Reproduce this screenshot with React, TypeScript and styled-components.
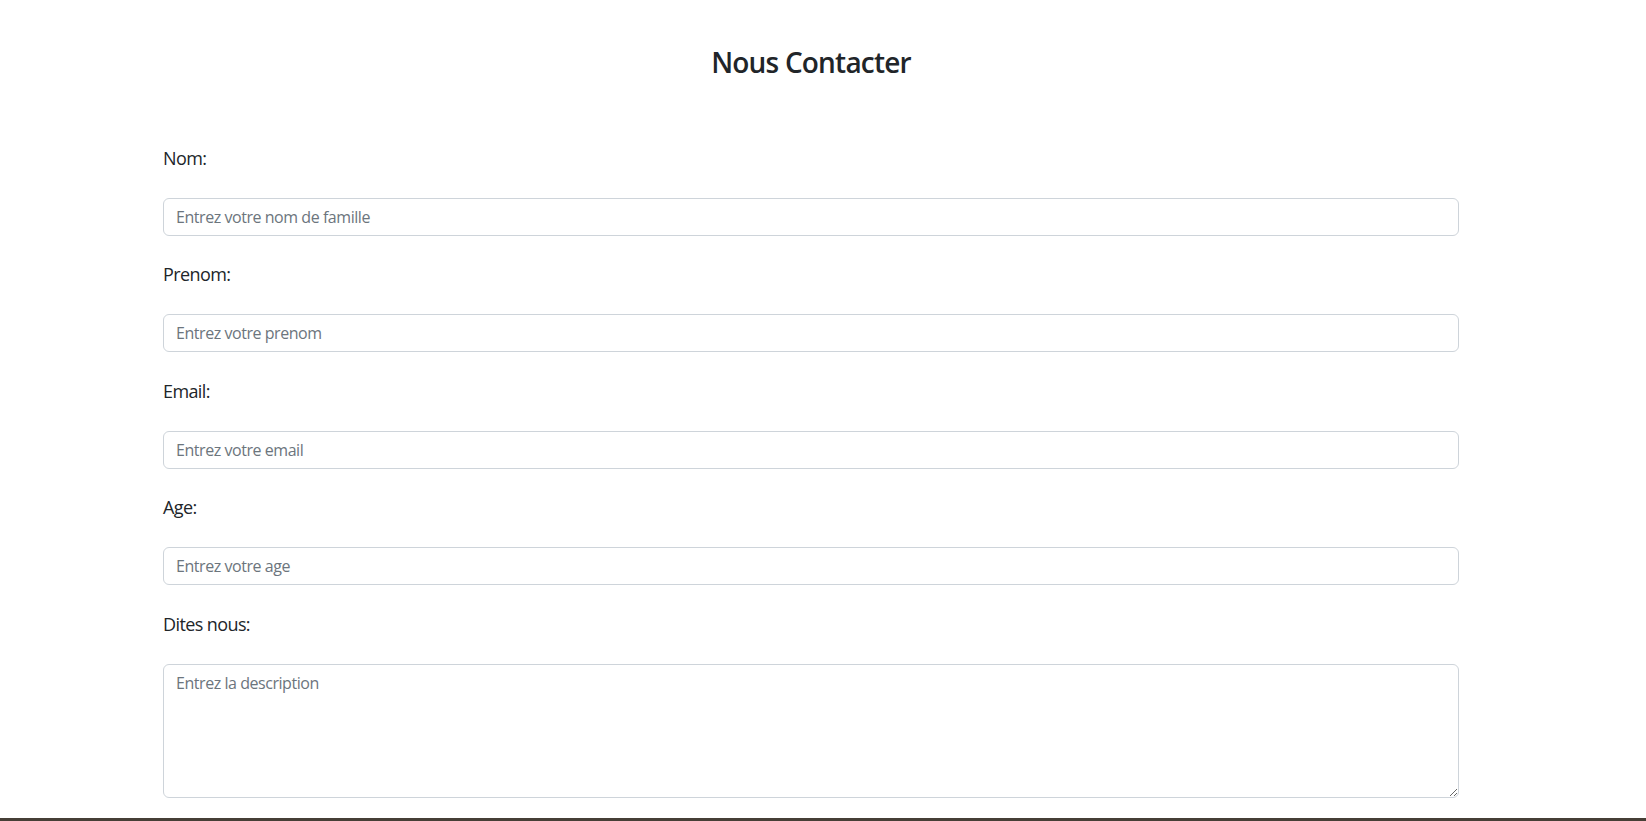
import styled, { createGlobalStyle } from 'styled-components'

const GlobalStyle = createGlobalStyle`
  * { box-sizing: border-box; }
  body {
    margin: 0;
    background: #fff;
    color: #212529;
    font-family: "Open Sans", "Noto Sans", sans-serif;
  }
`

const Main = styled.main`
  width: 1296px;
  margin-left: 163px;
  padding: 46px 0 20px;
`

const Title = styled.h3`
  margin: 0 0 65px;
  text-align: center;
  font-size: 28px;
  line-height: 1.2;
  font-weight: 600;
  letter-spacing: -0.8px;
  color: #212529;
`

const Form = styled.form`
  display: flex;
  flex-direction: column;
`

const Field = styled.div`
  display: flex;
  flex-direction: column;
  margin-bottom: 25.5px;
  &:last-child { margin-bottom: 0; }
`

const Label = styled.label`
  font-size: 18px;
  line-height: 27px;
  letter-spacing: -0.6px;
  margin-bottom: 26px;
  color: #212529;
`

const fieldBox = `
  display: block;
  width: 100%;
  padding: 6px 12px;
  font: inherit;
  font-size: 16px;
  line-height: 24px;
  letter-spacing: -0.45px;
  color: #212529;
  background: #fff;
  border: 1px solid #ced4da;
  border-radius: 6px;
  outline: none;
  &::placeholder { color: #6c757d; opacity: 1; }
`

const Input = styled.input`
  ${fieldBox}
  height: 38px;
`

const TextArea = styled.textarea`
  ${fieldBox}
  height: 134px;
  resize: vertical;
`

const Footer = styled.footer`
  height: 80px;
  background: #463f36;
`

const fields = [
  { id: 'nom', label: 'Nom:', placeholder: 'Entrez votre nom de famille', type: 'text' },
  { id: 'prenom', label: 'Prenom:', placeholder: 'Entrez votre prenom', type: 'text' },
  { id: 'email', label: 'Email:', placeholder: 'Entrez votre email', type: 'email' },
  { id: 'age', label: 'Age:', placeholder: 'Entrez votre age', type: 'number' },
]

export default function App() {
  return (
    <>
      <GlobalStyle />
      <Main>
        <Title>Nous Contacter</Title>
        <Form onSubmit={(e) => e.preventDefault()}>
          {fields.map((f) => (
            <Field key={f.id}>
              <Label htmlFor={f.id}>{f.label}</Label>
              <Input id={f.id} type={f.type} placeholder={f.placeholder} />
            </Field>
          ))}
          <Field>
            <Label htmlFor="description">Dites nous:</Label>
            <TextArea id="description" rows={5} placeholder="Entrez la description" />
          </Field>
        </Form>
      </Main>
      <Footer />
    </>
  )
}
